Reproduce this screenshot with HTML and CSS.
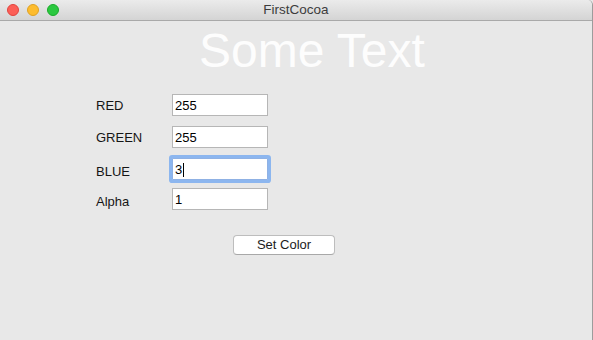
FILE: index.html
```html
<!DOCTYPE html>
<html>
<head>
<meta charset="utf-8">
<title>FirstCocoa</title>
<link rel="stylesheet" href="styles.css">
</head>
<body>
<div class="window">
  <div class="titlebar">
    <div class="lights">
      <span class="light red"></span>
      <span class="light yellow"></span>
      <span class="light green"></span>
    </div>
    <div class="title">FirstCocoa</div>
  </div>
  <div class="content">
    <h1 class="big">Some Text</h1>
    <div class="form">
      <div class="row">
        <span class="label">RED</span>
        <div class="field">255</div>
      </div>
      <div class="row">
        <span class="label">GREEN</span>
        <div class="field">255</div>
      </div>
      <div class="row">
        <span class="label label-low">BLUE</span>
        <div class="field focused">3<span class="caret"></span></div>
      </div>
      <div class="row row-tight">
        <span class="label label-low">Alpha</span>
        <div class="field">1</div>
      </div>
    </div>
    <div class="actions">
      <button class="btn" type="button">Set Color</button>
    </div>
  </div>
</div>
</body>
</html>
```
FILE: styles.css
```css
html, body {
  margin: 0;
  padding: 0;
  background: #e8e8e8;
}
body {
  font-family: "Liberation Sans", Arial, sans-serif;
  width: 593px;
  height: 340px;
  overflow: hidden;
}
.window {
  width: 592px;
  height: 340px;
  border-right: 1px solid #9c9c9c;
  background: #e8e8e8;
  border-radius: 5px 5px 0 0;
  overflow: hidden;
}
.titlebar {
  height: 20px;
  border-bottom: 1px solid #a9a9a9;
  background: linear-gradient(#ebebeb, #d4d4d4);
  display: grid;
  border-radius: 5px 5px 0 0;
}
.lights, .title {
  grid-area: 1 / 1;
}
.lights {
  display: flex;
  align-items: center;
  gap: 8px;
  padding-left: 7px;
}
.light {
  width: 12px;
  height: 12px;
  border-radius: 50%;
  box-sizing: border-box;
}
.red { background: #fc5f57; border: 1px solid #e0443e; }
.yellow { background: #fdbc2e; border: 1px solid #dea123; }
.green { background: #2bc840; border: 1px solid #1aab29; }
.title {
  text-align: center;
  font-size: 13.5px;
  line-height: 20px;
  color: #3c3c3c;
}
.content {
  display: flex;
  flex-direction: column;
}
.big {
  margin: 6px 0 0 0;
  padding-left: 199px;
  font-size: 48px;
  line-height: 48px;
  font-weight: normal;
  color: #fdfdfd;
}
.form {
  margin-top: 19px;
  padding-left: 96px;
  display: flex;
  flex-direction: column;
}
.row {
  display: flex;
  align-items: flex-start;
  margin-top: 10px;
}
.row:first-child { margin-top: 0; }
.row-tight { margin-top: 8px; }
.label {
  width: 76px;
  font-size: 13px;
  line-height: 16px;
  padding-top: 4px;
  color: #151515;
}
.label-low { padding-top: 6px; }
.field {
  box-sizing: border-box;
  width: 96px;
  height: 22px;
  border: 1px solid #b6b6b6;
  background: #ffffff;
  padding: 3px 0 0 2px;
  font-size: 13px;
  line-height: 16px;
  color: #000;
  display: flex;
  align-items: flex-start;
}
.focused {
  border-color: #8fb1e4;
  border-radius: 1px;
  box-shadow: 0 0 0 3px #8cb6ef;
}
.caret {
  display: inline-block;
  width: 1px;
  height: 14px;
  background: #000;
  margin-left: 1px;
  margin-top: 1px;
}
.actions {
  margin-top: 25px;
  padding-left: 233px;
  display: flex;
}
.btn {
  box-sizing: border-box;
  width: 102px;
  height: 20px;
  border: 1px solid #bdbdbd;
  border-bottom-color: #a8a8a8;
  border-radius: 4px;
  background: #ffffff;
  font-family: "Liberation Sans", Arial, sans-serif;
  font-size: 13px;
  line-height: 18px;
  color: #1b1b1b;
  padding: 0;
}
```
